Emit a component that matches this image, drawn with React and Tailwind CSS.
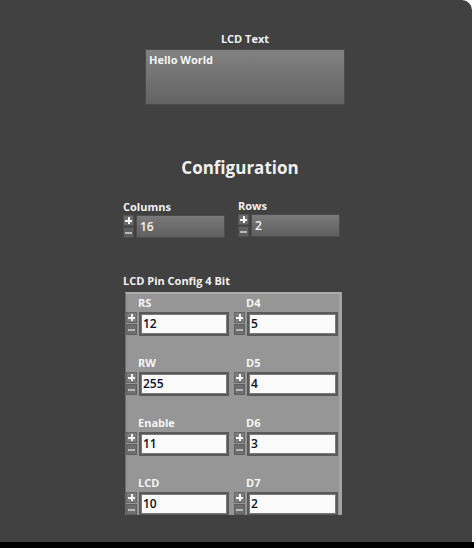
const FONT = { fontFamily: '"Open Sans", "Noto Sans", sans-serif' }

const pins = [
  ['RS', '12', 'D4', '5'],
  ['RW', '255', 'D5', '4'],
  ['Enable', '11', 'D6', '3'],
  ['LCD', '10', 'D7', '2'],
]

function Spin({ dark }) {
  return (
    <div className="flex flex-col gap-[1px] w-[11px] shrink-0">
      <div className={`relative h-[11px] border ${dark ? 'bg-[#6a6a6a] border-[#555]' : 'bg-[#7c7c7c] border-[#666]'}`}>
        <span className="absolute left-[1px] top-[3.5px] w-[7px] h-[2px] bg-[#f4f4f4]" />
        <span className="absolute left-[3.5px] top-[1px] w-[2px] h-[7px] bg-[#f4f4f4]" />
      </div>
      <div className={`h-[11px] flex items-center justify-center border ${dark ? 'bg-[#5e5e5e] border-[#4e4e4e]' : 'bg-[#6e6e6e] border-[#5e5e5e]'}`}>
        <span className="block w-[7px] h-[2px] bg-[#b8b8b8]" />
      </div>
    </div>
  )
}

function DarkNum({ value }) {
  return (
    <div className="flex gap-[2px]">
      <Spin dark />
      <div className="w-[90px] h-[23px] border border-[#4c4c4c] bg-gradient-to-b from-[#7a7a7a] to-[#5f5f5f] flex items-center pl-[3px]">
        <span className="text-[12px] font-semibold text-[#f5f5f5]">{value}</span>
      </div>
    </div>
  )
}

function PinNum({ value }) {
  return (
    <div className="flex gap-[2px]">
      <Spin />
      <div className="w-[91px] h-[24px] border-2 border-[#5a5a5a] bg-[#7a7a7a] p-[1px]">
        <div className="h-full bg-[#fbfbfb] flex items-center pl-[1px]">
          <span className="text-[12px] font-semibold text-[#0b0b2a]">{value}</span>
        </div>
      </div>
    </div>
  )
}

export default function App() {
  return (
    <div className="w-[476px] h-[548px] bg-white" style={FONT}>
      <div className="w-[472px] h-[542px] bg-[#414141] rounded-tr-[10px] overflow-hidden">
        <div className="pt-[31px] pl-[145px]">
          <div className="w-[200px] flex flex-col">
            <div className="text-center text-[11px] font-bold text-[#f2f2f2] leading-[16px]">LCD Text</div>
            <div className="mt-[2px] h-[56px] border border-[#4a4a4a] bg-gradient-to-b from-[#828282] to-[#636363] px-[3px] pt-[3px] text-[11px] leading-[14px] font-bold text-[#f5f5f5]">
              Hello World
            </div>
          </div>
        </div>

        <div className="ml-[123px] w-[234px] mt-[51px] text-center text-[17px] font-bold text-[#f0f0f0] leading-[24px]">
          Configuration
        </div>

        <div className="ml-[123px] mt-[19px] flex gap-[13px]">
          <div className="flex flex-col w-[102px]">
            <div className="text-[11px] font-bold text-[#f2f2f2] leading-[16px]">Columns</div>
            <DarkNum value="16" />
          </div>
          <div className="flex flex-col w-[102px] -mt-[1px]">
            <div className="text-[11px] font-bold text-[#f2f2f2] leading-[16px]">Rows</div>
            <DarkNum value="2" />
          </div>
        </div>

        <div className="ml-[123px] mt-[35px] text-[11px] font-bold text-[#f2f2f2] leading-[16px]">LCD Pin Config 4 Bit</div>

        <div className="ml-[125px] mt-[3px] w-[217px] h-[223px] overflow-hidden bg-[#969696] border-t-2 border-t-[#ababab] border-r-[3px] border-r-[#a4a4a4] border-l border-l-[#6c6c6c]">
          <div className="flex flex-col">
            {pins.map(([l1, v1, l2, v2]) => (
              <div key={l1} className="h-[60px] flex gap-[5px] pt-[1px]">
                <div className="flex flex-col w-[103px]">
                  <div className="pl-[12px] text-[11px] font-bold text-[#f5f5f5] leading-[16px] mb-[1px]">{l1}</div>
                  <PinNum value={v1} />
                </div>
                <div className="flex flex-col w-[104px]">
                  <div className="pl-[12px] text-[11px] font-bold text-[#f5f5f5] leading-[16px] mb-[1px]">{l2}</div>
                  <PinNum value={v2} />
                </div>
              </div>
            ))}
          </div>
        </div>
      </div>
      <div className="w-[474px] h-[6px] bg-black" />
    </div>
  )
}
